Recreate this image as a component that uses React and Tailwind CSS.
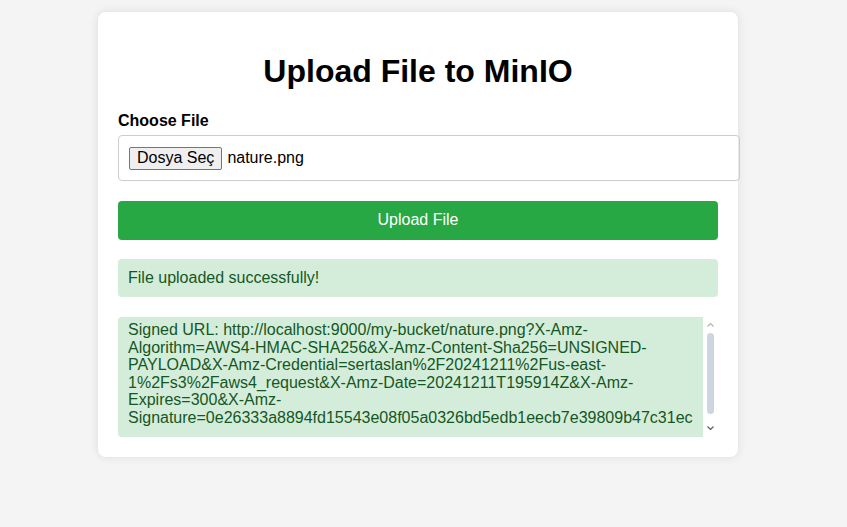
import React from 'react';

const SIGNED_URL =
    'http://localhost:9000/my-bucket/nature.png?X-Amz-Algorithm=AWS4-HMAC-SHA256&X-Amz-Content-Sha256=UNSIGNED-PAYLOAD&X-Amz-Credential=sertaslan%2F20241211%2Fus-east-1%2Fs3%2Faws4_request&X-Amz-Date=20241211T195914Z&X-Amz-Expires=300&X-Amz-Signature=0e26333a8894fd15543e08f05a0326bd5edb1eecb7e39809b47c31ec';

const Chevron = ({ up, color }) => (
    <svg width="7" height="4" viewBox="0 0 7 4" className="block">
        <polyline
            points={up ? '0.5,3.5 3.5,0.5 6.5,3.5' : '0.5,0.5 3.5,3.5 6.5,0.5'}
            fill="none"
            stroke={color}
            strokeWidth="1.2"
        />
    </svg>
);

const App = () => {
    return (
        <div className="min-h-screen bg-[#f4f4f4] pt-[12px] pl-[98px] font-['Liberation_Sans',Arial,sans-serif] text-[16px] leading-[1.15] text-black">
            <div className="w-[640px] rounded-[8px] bg-white p-[20px] shadow-[0_0_10px_rgba(0,0,0,0.1)]">
                {/* Header */}
                <h1 className="mt-[21px] mb-[22px] text-center text-[32px] font-bold leading-[37px]">Upload File to MinIO</h1>

                {/* File picker */}
                <label className="mb-[5px] block font-bold">Choose File</label>
                <div className="mb-[20px] w-[622px] rounded-[4px] border border-[#ccc] p-[10px]">
                    <div className="flex h-[24px] items-center">
                        <span className="mr-[5px] flex h-[23px] items-center rounded-[2px] border border-[#767676] bg-[#efefef] px-[7px]">
                            Dosya Seç
                        </span>
                        <span>nature.png</span>
                    </div>
                </div>

                <button className="block w-full rounded-[4px] bg-[#28a745] py-[10px] text-center text-white">
                    Upload File
                </button>

                <div className="mt-[19px] rounded-[4px] bg-[#d4edda] p-[10px] text-[#155724]">
                    File uploaded successfully!
                </div>

                {/* Signed URL, scrolled area */}
                <div className="mt-[20px] flex h-[120px]">
                    <div className="flex-1 overflow-hidden rounded-l-[4px] bg-[#d4edda] px-[10px] pt-[4px] leading-[17.5px] text-[#155724] break-words">
                        {`Signed URL: ${SIGNED_URL}`}
                    </div>
                    <div className="flex w-[15px] flex-col items-center pt-[6px] pb-[7px]">
                        <Chevron up color="#b4b4b4" />
                        <div className="mt-[6px] h-[81px] w-[7px] rounded-full bg-[#cdd6e0]" />
                        <div className="mt-auto">
                            <Chevron color="#606060" />
                        </div>
                    </div>
                </div>
            </div>
        </div>
    );
};

export default App;
